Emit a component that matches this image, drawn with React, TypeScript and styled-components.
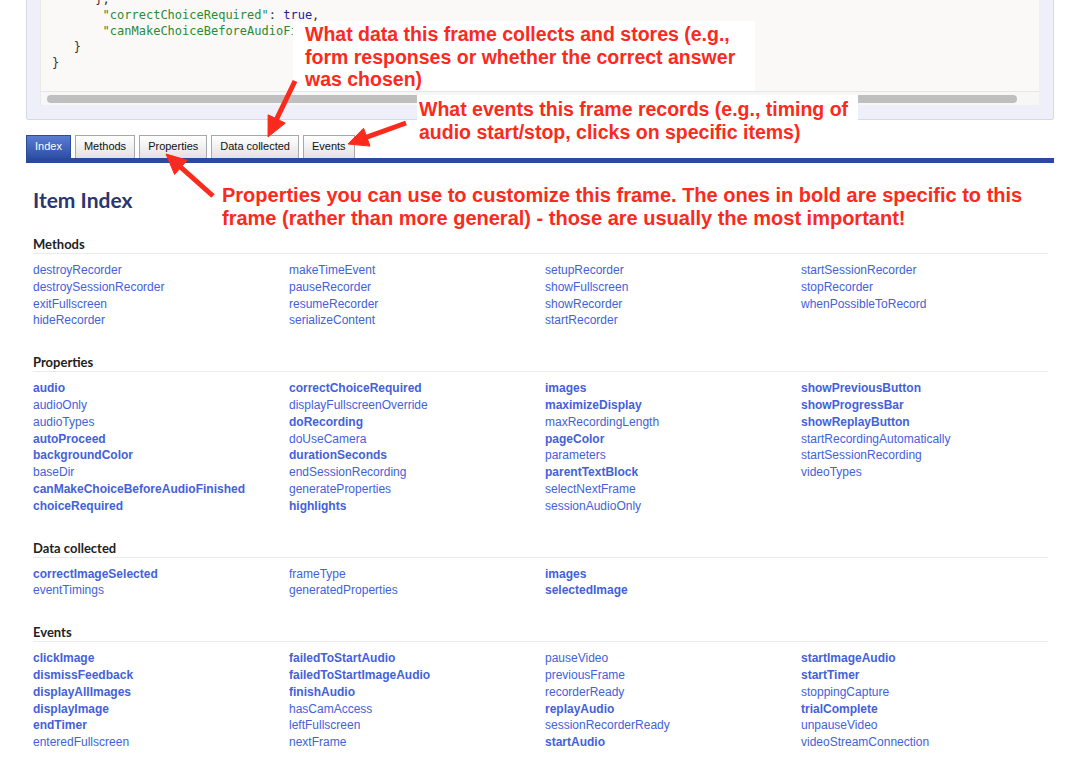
import React from 'react';
import styled, { createGlobalStyle } from 'styled-components';

const GlobalStyle = createGlobalStyle`
  body {
    margin: 0;
    background: #fff;
    font-family: "Liberation Sans", Arial, sans-serif;
  }
`;

const RED = '#fc2a1c';

const Page = styled.div`
  position: relative;
  width: 1070px;
  min-height: 780px;
  overflow: hidden;
`;

const Main = styled.div`
  margin-left: 26px;
  width: 1028px;
`;

const SourcePanel = styled.div`
  margin-top: -9px;
  background: #eeeff8;
  border: 1px solid #d5d8e6;
  border-top: none;
  border-radius: 0 0 3px 3px;
  padding: 0 14px 14px 13px;
`;

const CodeArea = styled.div`
  background: #faf9f7;
  border-left: 1px solid #ebe9e4;
`;

const CodePre = styled.pre`
  margin: 0;
  padding: 0 0 20px 11px;
  font-family: "DejaVu Sans Mono", "Liberation Mono", monospace;
  font-size: 12px;
  line-height: 16px;
  color: #333;
  white-space: pre;
  overflow: hidden;
`;

const Str = styled.span`
  color: #2a8a36;
`;

const Kw = styled.span`
  color: #1f2196;
`;

const ScrollTrack = styled.div`
  border-top: 1px solid #e6e6e6;
  background: #f7f7f7;
  padding: 3px 22px 2px 6px;
`;

const ScrollThumb = styled.div`
  height: 8px;
  border-radius: 4px;
  background: #bfbfbf;
`;

const TabBar = styled.div`
  display: flex;
  gap: 4px;
  margin-top: 15px;
  border-bottom: 5px solid #2a4a9e;
`;

const Tab = styled.div<{ $active?: boolean }>`
  height: 22px;
  line-height: 21px;
  padding: 0 8px;
  font-size: 11px;
  border: 1px solid ${p => (p.$active ? '#2a4a9e' : '#a8a8a8')};
  border-bottom: none;
  color: ${p => (p.$active ? '#fff' : '#111')};
  background: ${p =>
    p.$active
      ? 'linear-gradient(#5a7dd2, #2d4ea6)'
      : 'linear-gradient(#ffffff, #e2e2e2)'};
`;

const Content = styled.div`
  padding: 0 6px 0 7px;
`;

const Title = styled.h1`
  margin: 25px 0 23px;
  font-family: Lato, "Open Sans", sans-serif;
  font-size: 21px;
  line-height: 24px;
  font-weight: 700;
  color: #2b3670;
`;

const Section = styled.section`
  margin-bottom: 24px;
`;

const SectionTitle = styled.h2`
  margin: 0;
  font-family: Lato, "Open Sans", sans-serif;
  font-size: 13px;
  line-height: 18px;
  font-weight: 700;
  color: #222;
  border-bottom: 1px solid #ebebeb;
`;

const Columns = styled.div`
  display: grid;
  grid-template-columns: repeat(4, 256px);
  margin-top: 8px;
`;

const Column = styled.div`
  display: flex;
  flex-direction: column;
`;

const Item = styled.a<{ $bold?: boolean }>`
  font-size: 12px;
  line-height: 16.8px;
  color: #4461d9;
  font-weight: ${p => (p.$bold ? 700 : 400)};
  text-decoration: none;
`;

const Note = styled.div<{ $x: number; $y: number; $w: number; $size?: number }>`
  position: absolute;
  left: ${p => p.$x}px;
  top: ${p => p.$y}px;
  width: ${p => p.$w}px;
  box-sizing: border-box;
  background: #fff;
  color: ${RED};
  font-weight: 700;
  font-size: ${p => p.$size ?? 19.5}px;
  line-height: 22.6px;
  white-space: pre;
`;

const NotePad = styled.div<{ $pl: number; $pt: number; $pb: number }>`
  padding: ${p => p.$pt}px 0 ${p => p.$pb}px ${p => p.$pl}px;
`;

const ArrowLayer = styled.svg`
  position: absolute;
  left: 0;
  top: 0;
  pointer-events: none;
`;

type Section = { title: string; items: string[] };

// "!" marks items specific to this frame (shown bold)
const sections: Section[] = [
  {
    title: 'Methods',
    items: [
      'destroyRecorder', 'destroySessionRecorder', 'exitFullscreen', 'hideRecorder',
      'makeTimeEvent', 'pauseRecorder', 'resumeRecorder', 'serializeContent',
      'setupRecorder', 'showFullscreen', 'showRecorder', 'startRecorder',
      'startSessionRecorder', 'stopRecorder', 'whenPossibleToRecord',
    ],
  },
  {
    title: 'Properties',
    items: [
      '!audio', 'audioOnly', 'audioTypes', '!autoProceed', '!backgroundColor', 'baseDir',
      '!canMakeChoiceBeforeAudioFinished', '!choiceRequired',
      '!correctChoiceRequired', 'displayFullscreenOverride', '!doRecording', 'doUseCamera',
      '!durationSeconds', 'endSessionRecording', 'generateProperties', '!highlights',
      '!images', '!maximizeDisplay', 'maxRecordingLength', '!pageColor', 'parameters',
      '!parentTextBlock', 'selectNextFrame', 'sessionAudioOnly',
      '!showPreviousButton', '!showProgressBar', '!showReplayButton',
      'startRecordingAutomatically', 'startSessionRecording', 'videoTypes',
    ],
  },
  {
    title: 'Data collected',
    items: [
      '!correctImageSelected', 'eventTimings', 'frameType', 'generatedProperties',
      '!images', '!selectedImage',
    ],
  },
  {
    title: 'Events',
    items: [
      '!clickImage', '!dismissFeedback', '!displayAllImages', '!displayImage', '!endTimer',
      'enteredFullscreen', '!failedToStartAudio', '!failedToStartImageAudio', '!finishAudio',
      'hasCamAccess', 'leftFullscreen', 'nextFrame', 'pauseVideo', 'previousFrame',
      'recorderReady', '!replayAudio', 'sessionRecorderReady', '!startAudio',
      '!startImageAudio', '!startTimer', 'stoppingCapture', '!trialComplete',
      'unpauseVideo', 'videoStreamConnection',
    ],
  },
];

const splitColumns = (items: string[]) => {
  const per = Math.ceil(items.length / 4);
  const cols: string[][] = [];
  for (let i = 0; i < items.length; i += per) cols.push(items.slice(i, i + per));
  return cols;
};

const Arrow = ({ from, to }: { from: [number, number]; to: [number, number] }) => {
  const [x1, y1] = from;
  const [x2, y2] = to;
  const len = Math.hypot(x2 - x1, y2 - y1);
  const ux = (x2 - x1) / len;
  const uy = (y2 - y1) / len;
  const hl = 20;
  const hw = 9.5;
  const bx = x2 - ux * hl;
  const by = y2 - uy * hl;
  const pts = `${x2},${y2} ${bx - uy * hw},${by + ux * hw} ${bx + uy * hw},${by - ux * hw}`;
  return (
    <g fill={RED} stroke={RED}>
      <line x1={x1} y1={y1} x2={bx + ux * 3} y2={by + uy * 3} strokeWidth={5} />
      <polygon points={pts} strokeWidth={1} strokeLinejoin="round" />
    </g>
  );
};

const tabs = ['Index', 'Methods', 'Properties', 'Data collected', 'Events'];

const App = () => {
  return (
    <Page>
      <GlobalStyle />
      <Main>
        <SourcePanel>
          <CodeArea>
            <CodePre>
              {'      },\n'}
              {'       '}<Str>"correctChoiceRequired"</Str>: <Kw>true</Kw>,{'\n'}
              {'       '}<Str>"canMakeChoiceBeforeAudioFinished"</Str>: <Kw>true</Kw>{'\n'}
              {'   }\n'}
              {'}'}
            </CodePre>
            <ScrollTrack>
              <ScrollThumb />
            </ScrollTrack>
          </CodeArea>
        </SourcePanel>

        <TabBar>
          {tabs.map((t, i) => (
            <Tab key={t} $active={i === 0}>{t}</Tab>
          ))}
        </TabBar>

        <Content>
          <Title>Item Index</Title>
          {sections.map(s => (
            <Section key={s.title}>
              <SectionTitle>{s.title}</SectionTitle>
              <Columns>
                {splitColumns(s.items).map((col, ci) => (
                  <Column key={ci}>
                    {col.map(it => (
                      <Item key={it} $bold={it.startsWith('!')}>
                        {it.replace('!', '')}
                      </Item>
                    ))}
                  </Column>
                ))}
              </Columns>
            </Section>
          ))}
        </Content>
      </Main>

      <Note $x={293} $y={21} $w={462}>
        <NotePad $pl={12} $pt={2} $pb={0}>
          {'What data this frame collects and stores (e.g.,\nform responses or whether the correct answer\nwas chosen)'}
        </NotePad>
      </Note>
      <Note $x={417} $y={95} $w={441}>
        <NotePad $pl={2} $pt={3} $pb={2}>
          {'What events this frame records (e.g., timing of\naudio start/stop, clicks on specific items)'}
        </NotePad>
      </Note>
      <Note $x={220} $y={181} $w={820} $size={20}>
        <NotePad $pl={2} $pt={3} $pb={2}>
          {'Properties you can use to customize this frame. The ones in bold are specific to this\nframe (rather than more general) - those are usually the most important!'}
        </NotePad>
      </Note>

      <ArrowLayer width={1070} height={780}>
        <Arrow from={[295, 81]} to={[268, 137]} />
        <Arrow from={[406, 123]} to={[348, 144]} />
        <Arrow from={[213, 196]} to={[166, 154]} />
      </ArrowLayer>
    </Page>
  );
};

export default App;
